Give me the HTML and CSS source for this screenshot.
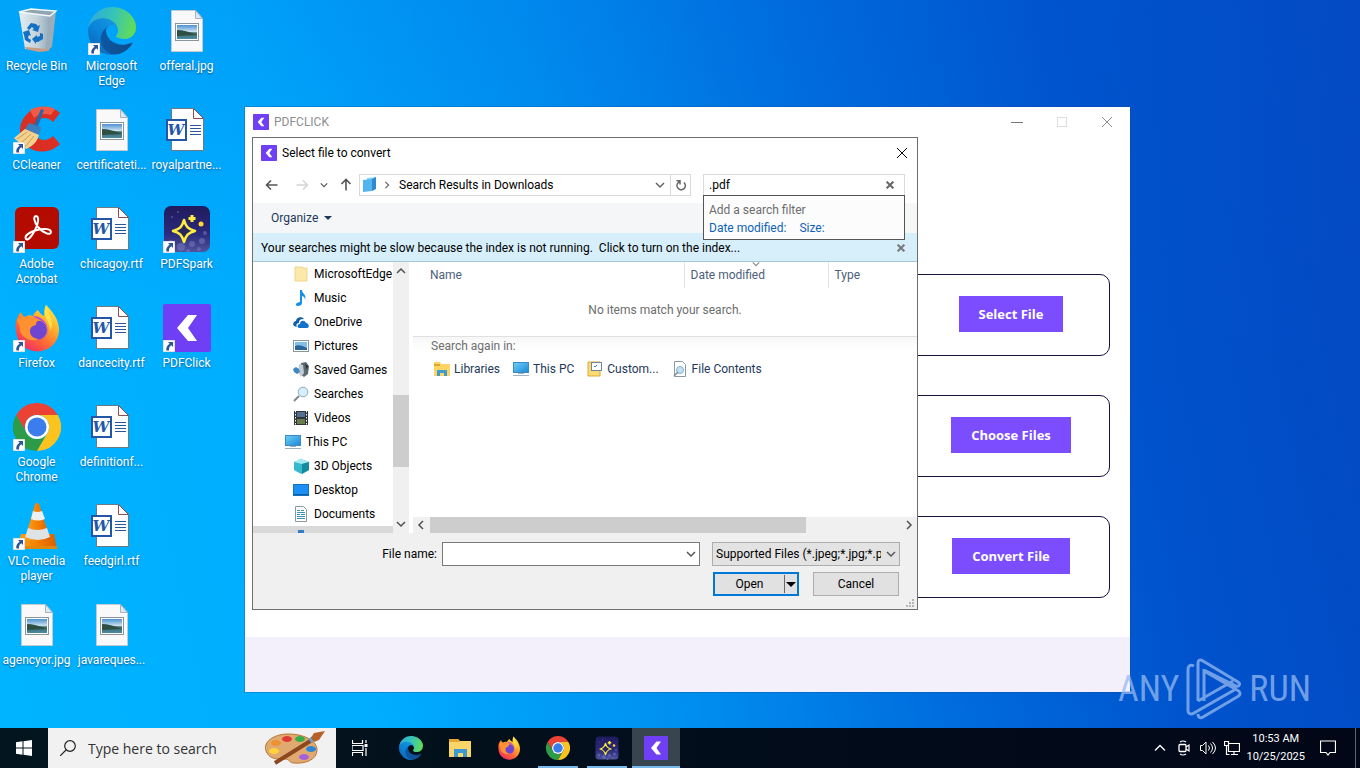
FILE: index.html
```
<!DOCTYPE html>
<html lang="en">
<head>
    <meta charset="UTF-8">
    <meta name="viewport" content="width=device-width, initial-scale=1.0">
    <title>Desktop</title>
    <link rel="stylesheet" href="styles.css">
</head>
<body>
    <!-- Shared icons -->
    <svg class="sprite" aria-hidden="true">
        <defs>
            <linearGradient id="g-edge1" x1="0" y1="0" x2="1" y2="0"><stop offset="0" stop-color="#0c59a4"/><stop offset="1" stop-color="#114a8b"/></linearGradient>
            <linearGradient id="g-edge2" x1="1" y1="0" x2="0.3" y2="1"><stop offset="0" stop-color="#1b9de2"/><stop offset="0.6" stop-color="#0883d9"/><stop offset="1" stop-color="#1065b4"/></linearGradient>
            <linearGradient id="g-edge3" x1="0" y1="0.3" x2="1" y2="0.5"><stop offset="0" stop-color="#2da9de"/><stop offset="0.5" stop-color="#36c4b8"/><stop offset="1" stop-color="#63dc56"/></linearGradient>
            <linearGradient id="g-fox" x1="0.9" y1="0" x2="0.2" y2="1"><stop offset="0" stop-color="#fff04a"/><stop offset="0.35" stop-color="#ffb02c"/><stop offset="0.65" stop-color="#ff6a35"/><stop offset="1" stop-color="#f0246b"/></linearGradient>
            <linearGradient id="g-sky" x1="0" y1="0" x2="0" y2="1"><stop offset="0" stop-color="#4d92cf"/><stop offset="0.5" stop-color="#cfe6f3"/><stop offset="0.55" stop-color="#3c6a63"/><stop offset="1" stop-color="#4c8aa8"/></linearGradient>
            <linearGradient id="g-bin" x1="0" y1="0" x2="1" y2="0"><stop offset="0" stop-color="#e3edf3"/><stop offset="0.6" stop-color="#c3d1da"/><stop offset="1" stop-color="#93aab9"/></linearGradient>
            <linearGradient id="g-screen" x1="0" y1="0" x2="1" y2="1"><stop offset="0" stop-color="#6fd0fb"/><stop offset="1" stop-color="#1a87d4"/></linearGradient>
            <linearGradient id="g-cone" x1="0" y1="0" x2="1" y2="0"><stop offset="0" stop-color="#ffa31a"/><stop offset="0.5" stop-color="#f58000"/><stop offset="1" stop-color="#d95f00"/></linearGradient>
            <linearGradient id="g-spark" x1="0" y1="0" x2="0" y2="1"><stop offset="0" stop-color="#211a5c"/><stop offset="0.6" stop-color="#2b2a7c"/><stop offset="1" stop-color="#50539a"/></linearGradient>
        </defs>

        <symbol id="i-arrow" viewBox="0 0 12 12">
            <rect width="12" height="12" fill="#fff" stroke="#c6c6c6" stroke-width="1"/>
            <path d="M5 2h5v5L8.300 5.300C6.500 6.500 5.800 8 6 10.500H3.500C2.600 7.500 4.500 5 6.700 3.700z" fill="#2a5699"/>
        </symbol>
        <symbol id="i-bin" viewBox="0 0 48 48">
            <path d="M6 5l12-3 25 2-6 6z" fill="#8fa5b2"/>
            <path d="M6 5l31 4-1 35-24-2z" fill="url(#g-bin)"/>
            <path d="M37 9l6-5-4 36-7 4z" fill="#9badb9"/>
            <path d="M12 40l23 2 4-3-4 5-9 1-13-3z" fill="#c79d86"/>
            <path d="M6 5l12-3 25 2-6 5z" fill="none" stroke="#f4f9fc" stroke-width="1.300"/>
            <g fill="#1470c2"><path d="M14 21l4-5 5 1 2 2 2-1-2 7-6-2 2-1-2-2-3 3z"/><path d="M10 25l6-2 2 6-2-1-1 3 3 2-1 3-5-3-1-5z"/><path d="M19 32l5-4v2l3-1 0-3 3 1 0 5-5 3h-2v2z"/></g>
        </symbol>
        <symbol id="i-edge" viewBox="0 0 256 256">
            <path fill="url(#g-edge1)" d="M231 190.500c-3.400 1.800-6.900 3.400-10.500 4.700a101.700 101.700 0 0 1-35.900 6.400c-47.300 0-88.500-32.500-88.500-74.300a31.500 31.500 0 0 1 16.400-27.300c-42.800 1.800-53.800 46.400-53.800 72.500 0 74 68.100 81.400 82.800 81.400 7.900 0 19.800-2.300 27-4.600l1.300-.4a128.300 128.300 0 0 0 66.600-52.800 4 4 0 0 0-5.400-5.600z"/>
            <path fill="url(#g-edge2)" d="M105.700 241.400a79.200 79.200 0 0 1-22.700-21.300 80.700 80.700 0 0 1 29.500-120c3.200-1.500 8.500-4.100 15.600-4a32.400 32.400 0 0 1 25.700 13 31.900 31.900 0 0 1 6.300 18.700c0-.2 24.500-79.600-80-79.600-43.900 0-80 41.600-80 78.200a130.200 130.200 0 0 0 12.100 56 128 128 0 0 0 156.400 67 75.500 75.500 0 0 1-62.800-8z"/>
            <path fill="url(#g-edge3)" d="M152.300 148.900c-.9 1-3.400 2.500-3.400 5.600 0 2.600 1.700 5.200 4.800 7.300 14.300 10 41.400 8.600 41.500 8.600a59.600 59.600 0 0 0 30.300-8.300 61.400 61.400 0 0 0 30.400-52.900c.3-22.400-8-37.300-11.300-43.900C223.500 23.900 177.700 0 128 0A128 128 0 0 0 0 126.200c.5-36.500 36.800-66 80-66 3.500 0 23.500.3 42 10a72.600 72.600 0 0 1 30.900 29.300c6.100 10.600 7.200 24.100 7.200 29.500s-2.700 13.300-7.800 19.900z"/>
        </symbol>
        <symbol id="i-jpg" viewBox="0 0 48 48">
            <path d="M8.500 3.500h24l7 8v33h-31z" fill="#f9f9f9" stroke="#c3cbd0"/>
            <path d="M32.500 3.500v8h7z" fill="#d8eaf4" stroke="#a8b2b8"/>
            <rect x="12.500" y="16.500" width="23" height="17" fill="#fff" stroke="#8b969c"/>
            <rect x="14" y="18" width="20" height="14" fill="url(#g-sky)"/>
            <path d="M14 23q8 0 20 5l-20 1z" fill="#2e4f44"/>
        </symbol>
        <symbol id="i-word" viewBox="0 0 48 48">
            <path d="M8.500 2.500h22l10 10v32h-32z" fill="#fff" stroke="#6b7a85"/>
            <path d="M30.500 2.500v10h10z" fill="#fff" stroke="#8a5050"/>
            <path d="M27 19.500h11M27 22.500h11M27 25.500h11M27 28.500h11" stroke="#2b579a"/>
            <rect x="4" y="14" width="19" height="20" fill="#fff" stroke="#2456a8" stroke-width="2"/>
        </symbol>
        <symbol id="i-ccleaner" viewBox="0 0 48 48">
            <path d="M47 7C38-1 23-1 14 8 4 18 5 34 15 41c9 7 23 6 32-3l-7-8c-6 6-14 5-17-1-4-6-2-13 4-16 5-2 9-1 13 3z" fill="#dc2f24"/>
            <path d="M17 4c7-4 17-5 25-1l-4 6c-6-2-13-1-17 3z" fill="#f25a45"/>
            <path d="M28 3l3 1-7 19-4-2z" fill="#2d66a4"/>
            <path d="M16 17l12 4-2 8-14-6z" fill="#3b7fc0"/>
            <path d="M12 23l14 6c-2 7-6 11-13 14L1 32z" fill="#f3d28f"/>
            <path d="M4 33l10-7M8 37l10-9M12 41l9-11" stroke="#cb9d55"/>
        </symbol>
        <symbol id="i-acrobat" viewBox="0 0 48 48">
            <rect x="2" y="2" width="44" height="42" rx="6" fill="#b30b00"/>
            <path d="M13 34c-2-3 3-7 11-9 8-2 14-1 14 2 0 4-8 1-13-5-4-5-5-11-2-11s3 7-1 14c-3 6-7 11-9 9z" fill="none" stroke="#fff" stroke-width="2"/>
        </symbol>
        <symbol id="i-spark" viewBox="0 0 48 48">
            <rect x="1" y="1" width="46" height="46" rx="7" fill="url(#g-spark)"/>
            <g fill="#7076bd" opacity="0.600"><circle cx="8" cy="38" r="3"/><circle cx="18" cy="42" r="4"/><circle cx="29" cy="39" r="3"/><circle cx="39" cy="36" r="3"/><circle cx="36" cy="44" r="2"/><circle cx="25" cy="46" r="2"/><circle cx="42" cy="28" r="2"/><circle cx="9" cy="12" r="1"/><circle cx="15" cy="7" r="1"/></g>
            <path d="M21 15c2 7 4 9 11 11-7 2-9 4-11 11-2-7-4-9-11-11 7-2 9-4 11-11z" fill="#29255f" stroke="#ffee3d" stroke-width="2.600" stroke-linejoin="round"/>
            <path d="M29 10v7M25.500 13.500h7" stroke="#ffee3d" stroke-width="3"/>
            <circle cx="38" cy="19" r="2.500" fill="#ffd92e"/>
        </symbol>
        <symbol id="i-click" viewBox="0 0 48 48">
            <rect width="48" height="48" rx="2" fill="#6f3ff5"/>
            <path d="M25 11h9l-9 13 9 13h-9L14 24z" fill="#fff"/>
        </symbol>
        <symbol id="i-firefox" viewBox="0 0 48 48">
            <path d="M8 8c1 3 2 4 4 5 3-2 5-2 8-1 1-3 3-5 5-6 0 0 2 4 6 6 1-4 0-8 2-11 6 6 13 14 13 25a21 21 0 0 1-43 0c-1-6 0-12 5-18z" fill="url(#g-fox)"/>
            <circle cx="24" cy="26" r="10" fill="#7045cf"/>
            <path d="M4 16c3-4 7-3 9-1 6-3 12-2 16 2-5-1-6 1-6 4-3 1-5 1-6 5-1 5 4 9 9 9-8 4-19-2-19-10 0-4-2-5-3-9z" fill="#ff9131"/>
            <path d="M20 12c6 0 14 4 15 14 0 8-7 11-12 10 10 1 15-9 9-16-4-5-9-5-12-8z" fill="#b64be0"/>
            <path d="M33 1c-2 4-2 9 0 13 3 5 4 8 4 12 4-6 1-13-1-16z" fill="#ffe14a"/>
        </symbol>
        <symbol id="i-chrome" viewBox="0 0 48 48">
            <path d="M3.200 12A24 24 0 0 1 44.800 12H24A12 12 0 0 0 13.600 30z" fill="#ea4335"/>
            <path d="M3.200 12L13.600 30A12 12 0 0 0 34.400 30L24 48A24 24 0 0 1 3.200 12z" fill="#2c9c48"/>
            <path d="M44.800 12A24 24 0 0 1 24 48L34.400 30A12 12 0 0 0 24 12z" fill="#fcc31e"/>
            <circle cx="24" cy="24" r="12" fill="#fff"/>
            <circle cx="24" cy="24" r="9.500" fill="#3b7ded"/>
        </symbol>
        <symbol id="i-vlc" viewBox="0 0 48 48">
            <path d="M8 32h33l3 15H4z" fill="url(#g-cone)"/>
            <path d="M4 44h40v3H4z" fill="#e0880f"/>
            <path d="M22 2q2-2 4 0l11 35q-12 7-25 0z" fill="url(#g-cone)"/>
            <path d="M20 9q4 2 9 0l3 8q-7 3-14 0z" fill="#eceff1"/>
            <path d="M15 26q9 4 19 0l3 9q-12 6-25 0z" fill="#dfe3e6"/>
        </symbol>

        <symbol id="i-folder" viewBox="0 0 16 16"><path d="M2 1h7l1 1h4v13H2z" fill="#fbe9ac" stroke="#edd68c"/></symbol>
        <symbol id="i-music" viewBox="0 0 16 16"><path d="M7 0h2c0 4 5 4 3 10 0-3-2-4-3-4v7c0 2-2 3-4 3s-3-2-1-3 2-1 3-1z" fill="#1a8fe6"/></symbol>
        <symbol id="i-onedrive" viewBox="0 0 16 16"><path d="M1 12c-2-2 0-5 2-5 0-4 6-5 8-2-4 0-5 1-5 4-3 0-3 3-2 4z" fill="#0f5eb0"/><path d="M6 14c-2-1-2-4 1-4 0-4 5-4 6-1 3 0 4 5 1 5z" fill="#1273cc"/></symbol>
        <symbol id="i-pictures" viewBox="0 0 16 16"><rect x="0.500" y="2.500" width="15" height="11" fill="#fff" stroke="#8996a1"/><path d="M2 4h12v8H2z" fill="#7fbfe9"/><path d="M2 8q5-2 12 2v2H2z" fill="#2b6597"/></symbol>
        <symbol id="i-games" viewBox="0 0 16 16"><path d="M8 1l5-1 3 4-1 8-4 3-4-3z" fill="#5d6970"/><path d="M6 2l4 1 1 8-3 4-3-5z" fill="#c3ccd2"/><path d="M0 7l3-2 3 2 1 3-3 2-3-2z" fill="#3d87c2"/><path d="M12 2l3 2-1 4z" fill="#252c31"/></symbol>
        <symbol id="i-search" viewBox="0 0 16 16"><path d="M1 15l5-5" stroke="#7c8790" stroke-width="2"/><circle cx="10" cy="6" r="4.800" fill="#d5effc" stroke="#8fa9b9"/></symbol>
        <symbol id="i-videos" viewBox="0 0 16 16"><path d="M1 1h14v14H1z" fill="#2e3438"/><path d="M4 2h8v5H4z" fill="#536f92"/><path d="M4 9h8v5H4z" fill="#6a7d4f"/><path d="M2.500 1v14M13.500 1v14" stroke="#fff" stroke-dasharray="1.500 1.500"/></symbol>
        <symbol id="i-pc" viewBox="0 0 16 16"><rect x="0.500" y="1.500" width="15" height="10" fill="url(#g-screen)" stroke="#3d8ac2"/><path d="M5 12.500h6M0 14.500h16" stroke="#9db2c0"/></symbol>
        <symbol id="i-cube" viewBox="0 0 16 16"><path d="M1 4l7-3 8 3v8l-8 4-7-4z" fill="#36b8cf"/><path d="M1 4l7-3 8 3-7 2z" fill="#a3ecf2"/><path d="M9 6l7-2v8l-7 4z" fill="#148a9d"/></symbol>
        <symbol id="i-desktop" viewBox="0 0 16 16"><rect x="0.500" y="2.500" width="15" height="11" fill="#1a90f4" stroke="#1671bd"/><path d="M1 12.500h14" stroke="#0d5ca8"/></symbol>
        <symbol id="i-docs" viewBox="0 0 16 16"><path d="M2.500 0.500h8l3 3v12h-11z" fill="#fff" stroke="#8b989f"/><path d="M4 4.500h3M8 4.500h3M4 6.500h8M4 8.500h3M8 8.500h4M4 10.500h8M4 12.500h8" stroke="#3d91bd"/></symbol>
        <symbol id="i-libraries" viewBox="0 0 16 16"><path d="M0 1h6l1 2h9v12H0z" fill="#fcd462"/><path d="M0 3h6v2H0z" fill="#dda52c"/><path d="M3 15V9h10v6h-3v-3H6v3z" fill="#409bd2"/></symbol>
        <symbol id="i-custom" viewBox="0 0 16 16"><path d="M1 1h12v14H1z" fill="#fada72" stroke="#dcac35"/><rect x="4.500" y="1.500" width="10" height="8" fill="#fff" stroke="#6e8698"/><path d="M7 5l1 1 2-2" stroke="#2480c7" fill="none"/></symbol>
        <symbol id="i-contents" viewBox="0 0 16 16"><path d="M2.500 0.500h8l3 3v12h-11z" fill="#fff" stroke="#8b989f"/><circle cx="8" cy="9" r="3.500" fill="#c2e1f4" stroke="#8ab0ca"/><path d="M2 15l4-4" stroke="#75899a" stroke-width="1.500"/></symbol>
        <symbol id="i-results" viewBox="0 0 16 16"><path d="M5 1l9-1v12l-9 1z" fill="#8cd3f8"/><path d="M1 3l9-1v12l-9 1z" fill="#54b4ee"/><path d="M10 2l4-2v12l-4 2z" fill="#2d8cd0"/></symbol>

        <symbol id="i-left" viewBox="0 0 16 16"><path d="M13.500 8H2.500M7 3.500L2.500 8 7 12.500" fill="none" stroke="currentColor" stroke-width="1.600"/></symbol>
        <symbol id="i-down" viewBox="0 0 10 10"><path d="M1 3l4 4 4-4" fill="none" stroke="currentColor" stroke-width="1.500"/></symbol>
        <symbol id="i-x" viewBox="0 0 12 12"><path d="M1 1l10 10M11 1L1 11" fill="none" stroke="currentColor"/></symbol>
    </svg>

    <main class="desktop">
        <ul class="shortcuts">
            <li><span class="pic"><svg><use href="#i-bin"/></svg></span>Recycle Bin</li>
            <li><span class="pic"><svg><use href="#i-ccleaner"/></svg><svg class="link-mark"><use href="#i-arrow"/></svg></span>CCleaner</li>
            <li><span class="pic"><svg><use href="#i-acrobat"/></svg><svg class="link-mark"><use href="#i-arrow"/></svg></span>Adobe Acrobat</li>
            <li><span class="pic"><svg><use href="#i-firefox"/></svg><svg class="link-mark"><use href="#i-arrow"/></svg></span>Firefox</li>
            <li><span class="pic"><svg><use href="#i-chrome"/></svg><svg class="link-mark"><use href="#i-arrow"/></svg></span>Google Chrome</li>
            <li><span class="pic"><svg><use href="#i-vlc"/></svg><svg class="link-mark"><use href="#i-arrow"/></svg></span>VLC media player</li>
            <li><span class="pic"><svg><use href="#i-jpg"/></svg></span>agencyor.jpg</li>
            <li><span class="pic"><svg><use href="#i-edge"/></svg><svg class="link-mark"><use href="#i-arrow"/></svg></span>Microsoft Edge</li>
            <li><span class="pic"><svg><use href="#i-jpg"/></svg></span>certificateti...</li>
            <li><span class="pic"><svg><use href="#i-word"/></svg><b class="word-letter">W</b></span>chicagoy.rtf</li>
            <li><span class="pic"><svg><use href="#i-word"/></svg><b class="word-letter">W</b></span>dancecity.rtf</li>
            <li><span class="pic"><svg><use href="#i-word"/></svg><b class="word-letter">W</b></span>definitionf...</li>
            <li><span class="pic"><svg><use href="#i-word"/></svg><b class="word-letter">W</b></span>feedgirl.rtf</li>
            <li><span class="pic"><svg><use href="#i-jpg"/></svg></span>javareques...</li>
            <li><span class="pic"><svg><use href="#i-jpg"/></svg></span>offeral.jpg</li>
            <li><span class="pic"><svg><use href="#i-word"/></svg><b class="word-letter">W</b></span>royalpartne...</li>
            <li><span class="pic"><svg><use href="#i-spark"/></svg><svg class="link-mark"><use href="#i-arrow"/></svg></span>PDFSpark</li>
            <li><span class="pic"><svg><use href="#i-click"/></svg><svg class="link-mark"><use href="#i-arrow"/></svg></span>PDFClick</li>
        </ul>

        <section class="app">
            <header class="app-title">
                <svg class="ico"><use href="#i-click"/></svg>
                <span>PDFCLICK</span>
                <div class="win-buttons">
                    <button aria-label="Minimize"><svg viewBox="0 0 12 12"><path d="M0 6.500h12" stroke="#777"/></svg></button>
                    <button aria-label="Maximize" disabled><svg viewBox="0 0 12 12"><rect x="1.500" y="1.500" width="9" height="9" fill="none" stroke="#ddd"/></svg></button>
                    <button aria-label="Close"><svg><use href="#i-x"/></svg></button>
                </div>
            </header>
            <div class="cards">
                <div class="card"><div class="card-action"><button>Select File</button></div></div>
                <div class="card"><div class="card-action"><button>Choose Files</button></div></div>
                <div class="card"><div class="card-action"><button>Convert File</button></div></div>
            </div>
            <footer class="app-footer"></footer>

            <!-- File picker -->
            <section class="dialog" role="dialog" aria-labelledby="dialog-title">
                <header class="dialog-title">
                    <svg class="ico"><use href="#i-click"/></svg>
                    <h1 id="dialog-title">Select file to convert</h1>
                    <button aria-label="Close"><svg><use href="#i-x"/></svg></button>
                </header>

                <div class="nav">
                    <button class="nav-back" aria-label="Back"><svg><use href="#i-left"/></svg></button>
                    <button class="nav-forward" aria-label="Forward" disabled><svg><use href="#i-left"/></svg></button>
                    <button class="nav-recent" aria-label="Recent locations"><svg><use href="#i-down"/></svg></button>
                    <button class="nav-up" aria-label="Up"><svg><use href="#i-left"/></svg></button>
                    <div class="address">
                        <svg class="ico"><use href="#i-results"/></svg>
                        <svg class="crumb"><use href="#i-down"/></svg>
                        <span>Search Results in Downloads</span>
                        <button aria-label="Previous locations"><svg><use href="#i-down"/></svg></button>
                        <button class="refresh" aria-label="Refresh"><svg viewBox="0 0 12 12"><path d="M9 3.500A4.200 4.200 0 1 1 4.500 2.700M1.500 1.700H5v3.800" fill="none" stroke="currentColor" stroke-width="1.500"/></svg></button>
                    </div>
                    <div class="search">
                        <input type="text" value=".pdf" aria-label="Search">
                        <button aria-label="Clear search"><svg><use href="#i-x"/></svg></button>
                        <div class="filters">
                            <p>Add a search filter</p>
                            <a href="#">Date modified:</a>
                            <a href="#">Size:</a>
                        </div>
                    </div>
                </div>

                <div class="toolbar"><button>Organize <i class="caret"></i></button></div>

                <div class="notice">
                    <span>Your searches might be slow because the index is not running.&nbsp; Click to turn on the index...</span>
                    <button aria-label="Dismiss"><svg><use href="#i-x"/></svg></button>
                </div>

                <div class="browser">
                    <ul class="tree">
                        <li><svg class="ico"><use href="#i-folder"/></svg>MicrosoftEdge</li>
                        <li><svg class="ico"><use href="#i-music"/></svg>Music</li>
                        <li><svg class="ico"><use href="#i-onedrive"/></svg>OneDrive</li>
                        <li><svg class="ico"><use href="#i-pictures"/></svg>Pictures</li>
                        <li><svg class="ico"><use href="#i-games"/></svg>Saved Games</li>
                        <li><svg class="ico"><use href="#i-search"/></svg>Searches</li>
                        <li><svg class="ico"><use href="#i-videos"/></svg>Videos</li>
                        <li class="root"><svg class="ico"><use href="#i-pc"/></svg>This PC</li>
                        <li><svg class="ico"><use href="#i-cube"/></svg>3D Objects</li>
                        <li><svg class="ico"><use href="#i-desktop"/></svg>Desktop</li>
                        <li><svg class="ico"><use href="#i-docs"/></svg>Documents</li>
                        <li class="selected"><svg class="ico" viewBox="0 0 16 16"><path d="M5 0h6v8h4l-7 7-7-7h4z" fill="#2f7fc4"/></svg></li>
                    </ul>
                    <div class="scroll-y">
                        <svg class="flip"><use href="#i-down"/></svg>
                        <i></i>
                        <svg><use href="#i-down"/></svg>
                    </div>
                    <div class="results">
                        <table>
                            <thead>
                                <tr><th class="col-name">Name</th><th class="col-date">Date modified<svg><use href="#i-down"/></svg></th><th>Type</th></tr>
                            </thead>
                            <tbody>
                                <tr><td colspan="3">No items match your search.</td></tr>
                            </tbody>
                        </table>
                        <div class="again">
                            <p>Search again in:</p>
                            <div class="places">
                                <button><svg class="ico"><use href="#i-libraries"/></svg>Libraries</button>
                                <button><svg class="ico"><use href="#i-pc"/></svg>This PC</button>
                                <button><svg class="ico"><use href="#i-custom"/></svg>Custom...</button>
                                <button><svg class="ico"><use href="#i-contents"/></svg>File Contents</button>
                            </div>
                        </div>
                        <div class="scroll-x">
                            <svg class="turn-left"><use href="#i-down"/></svg>
                            <div><i></i></div>
                            <svg class="turn-right"><use href="#i-down"/></svg>
                        </div>
                    </div>
                </div>

                <footer class="dialog-footer">
                    <div class="line">
                        <label for="file-name">File name:</label>
                        <div class="combo">
                            <input type="text" id="file-name">
                            <svg><use href="#i-down"/></svg>
                        </div>
                        <div class="file-type">
                            <select aria-label="File type"><option>Supported Files (*.jpeg;*.jpg;*.png)</option></select>
                            <svg><use href="#i-down"/></svg>
                        </div>
                    </div>
                    <div class="line actions">
                        <button class="open"><span>Open</span><b><i class="caret"></i></b></button>
                        <button class="cancel">Cancel</button>
                    </div>
                    <svg class="grip" viewBox="0 0 9 9"><path d="M6 0h2v2H6zM3 3h2v2H3zM6 3h2v2H6zM0 6h2v2H0zM3 6h2v2H3zM6 6h2v2H6z" fill="#b5b5b5"/></svg>
                </footer>
            </section>
        </section>

        <div class="watermark">
            <span>ANY</span>
            <svg viewBox="0 0 56 62"><path d="M8 8C4 6 2 8 2 12v40c0 4 3 5 6 3l42-24M12 43V5c0-3 2-4 5-2l35 21c3 2 1 5-2 4L18 12M12 43l35-20M12 56c0 3 2 5 5 3l34-20c4-2 4-5 0-7L18 13v30" fill="none" stroke="currentColor" stroke-width="3"/></svg>
            <span>RUN</span>
        </div>
    </main>

    <footer class="taskbar">
        <button class="start" aria-label="Start"><svg viewBox="0 0 16 16"><path d="M0 2.200L6.500 1.300v6.200H0zM7.500 1.200L16 0v7.500H7.500zM0 8.500h6.500v6.200L0 13.800zM7.500 8.500H16V16l-8.500-1.200z" fill="#fff"/></svg></button>
        <div class="task-search">
            <svg class="lens" viewBox="0 0 16 16"><circle cx="10" cy="6" r="5.300" fill="none" stroke="#222" stroke-width="1.200"/><path d="M6 10l-6 6" stroke="#222" stroke-width="1.200"/></svg>
            <input type="text" placeholder="Type here to search" aria-label="Search Windows">
            <svg class="palette" viewBox="0 0 62 34">
                <path d="M3 22C-3 12 9 3 24 3s29 6 29 16-12 14-23 13c-5 0-4-4-9-4-6 0-14 1-18-6z" fill="#e0a970" stroke="#b87536"/>
                <ellipse cx="12" cy="12" rx="5" ry="3" fill="#f0912f"/><ellipse cx="10" cy="20" rx="5" ry="3" fill="#ffd43b"/><ellipse cx="23" cy="8" rx="5" ry="3" fill="#e03b35"/><ellipse cx="36" cy="8" rx="5" ry="3" fill="#39ac49"/><ellipse cx="47" cy="18" rx="5" ry="3" fill="#2c86d4"/><ellipse cx="40" cy="26" rx="5" ry="3" fill="#a561dc"/>
                <path d="M11 32L48 9" stroke="#8a4720" stroke-width="4"/><path d="M46 10l5-4" stroke="#6aa6cc" stroke-width="5"/><path d="M50 2l11-2-6 9-5 2-3-4z" fill="#b9602a"/>
            </svg>
        </div>
        <button class="task-view" aria-label="Task view"><svg viewBox="0 0 16 16"><path d="M0.500 0v3.500h10V0M0.500 16v-3.500h10V16M0 5.500h11v5H0zM14 0v3M14 8v8" fill="none" stroke="#fff" stroke-width="1.200"/><path d="M12.500 4h3v3h-3z" fill="#fff"/></svg></button>
        <nav class="tasks">
            <button aria-label="Microsoft Edge"><svg><use href="#i-edge"/></svg></button>
            <button aria-label="File Explorer"><svg viewBox="0 0 24 24"><path d="M1 3h9l2 2h11v16H1z" fill="#fbd568"/><path d="M1 3h9l2 3H1z" fill="#e5a52e"/><path d="M6 21v-8h13v8h-4v-4h-5v4z" fill="#3a98d2"/></svg></button>
            <button aria-label="Firefox"><svg><use href="#i-firefox"/></svg></button>
            <button class="running" aria-label="Google Chrome"><svg><use href="#i-chrome"/></svg></button>
            <button class="running" aria-label="PDFSpark"><svg><use href="#i-spark"/></svg></button>
            <button class="running active" aria-label="PDFClick"><svg><use href="#i-click"/></svg></button>
        </nav>
        <div class="tray">
            <button aria-label="Show hidden icons"><svg viewBox="0 0 16 16"><path d="M3 10.500l5-5 5 5" fill="none" stroke="#fff" stroke-width="1.300"/></svg></button>
            <button aria-label="Meet now"><svg viewBox="0 0 16 16"><rect x="3" y="4.500" width="7" height="7" rx="1" fill="none" stroke="#fff" stroke-width="1.300"/><path d="M10 7l3-2v6l-3-2M4 2q3-2 6 0M4 14q3 2 6 0" fill="none" stroke="#fff" stroke-width="1.200"/></svg></button>
            <button aria-label="Volume"><svg viewBox="0 0 16 16"><path d="M0.500 5.500h2l3.500-3.500v12l-3.500-3.500h-2zM8.500 5.500q2 2.500 0 5M10.500 3.500q4 4.500 0 9M12.500 2q6 6 0 12" fill="none" stroke="#fff"/></svg></button>
            <button aria-label="Network"><svg viewBox="0 0 16 16"><path d="M4.500 3.500h11v8h-11zM10 11.500v3M7 14.500h7M0.500 1.500h4v4h-4zM2.500 5.500v9h3" fill="none" stroke="#fff" stroke-width="1.200"/></svg></button>
            <div class="clock"><time>10:53 AM</time><time>10/25/2025</time></div>
            <button class="alerts" aria-label="Notifications"><svg viewBox="0 0 16 16"><path d="M0.500 1h15v11.500H10L8 15l-2-2.500H0.500z" fill="none" stroke="#fff" stroke-width="1.200"/></svg></button>
        </div>
    </footer>
</body>
</html>
```
FILE: styles.css
```
* {
    box-sizing: border-box;
}

body {
    display: flex;
    flex-direction: column;
    min-height: 100vh;
    margin: 0;
    font-family: Roboto, "Open Sans", sans-serif;
    font-size: 12px;
    line-height: 16px;
    color: #000;
}

ul, p, h1 {
    margin: 0;
    padding: 0;
    list-style: none;
    font-size: inherit;
    font-weight: normal;
}

button, input, select {
    margin: 0;
    padding: 0;
    border: 0;
    background: none;
    color: inherit;
    font: inherit;
}

button {
    display: flex;
    align-items: center;
    justify-content: center;
}

svg {
    display: block;
    flex: none;
}

.sprite {
    position: absolute;
    width: 0;
    height: 0;
}

.ico {
    width: 16px;
    height: 16px;
}

.caret {
    border: 4px solid transparent;
    border-top-color: currentColor;
    border-bottom: 0;
}

/* Desktop */
.desktop {
    position: relative;
    flex: 1;
    overflow: hidden;
    background:
        linear-gradient(180deg, rgba(0, 90, 215, 0.15), rgba(0, 90, 220, 0) 50%),
        linear-gradient(78deg, #00b4ff 0%, #00adff 25%, #0090f0 45%, #006edf 62%, #0052cc 80%, #0348c0 100%);
}

.shortcuts {
    display: grid;
    grid-template-rows: repeat(7, 99px);
    grid-auto-flow: column;
    grid-auto-columns: 75px;
    justify-content: start;
    color: #fff;
    line-height: 15px;
    text-align: center;
    text-shadow: 0 1px 2px rgba(0, 30, 80, 0.6);
}

.shortcuts li {
    display: flex;
    flex-direction: column;
    align-items: center;
    padding: 7px 2px 0 0;
}

.pic {
    position: relative;
    margin-bottom: 4px;
}

.pic svg {
    width: 48px;
    height: 48px;
}

.pic .link-mark {
    position: absolute;
    left: 0;
    bottom: 0;
    width: 12px;
    height: 12px;
}

.word-letter {
    position: absolute;
    top: 14px;
    left: 4px;
    width: 19px;
    font: italic bold 15px/20px "DejaVu Serif", serif;
    color: #2456a8;
    text-shadow: none;
}

/* App window */
.app {
    position: absolute;
    inset: 107px 230px 36px 245px;
    display: flex;
    flex-direction: column;
    background: #fff;
    box-shadow: 0 0 0 1px rgba(20, 70, 130, 0.3);
}

.app-title {
    display: flex;
    align-items: center;
    height: 29px;
    padding-left: 8px;
    gap: 5px;
    color: #8e8e8e;
}

.win-buttons {
    display: flex;
    margin: 0 1px 0 auto;
}

.win-buttons button {
    width: 45px;
    height: 29px;
}

.win-buttons svg, .dialog-title button svg {
    width: 12px;
    height: 12px;
}

.cards {
    display: flex;
    flex: 1;
    flex-direction: column;
    justify-content: flex-end;
    gap: 39px;
    padding: 0 20px 39px;
}

.card {
    display: flex;
    align-items: center;
    justify-content: flex-end;
    height: 82px;
    padding: 0 38px 2px 0;
    border: 1px solid #14143c;
    border-radius: 10px;
}

.card-action {
    display: flex;
    justify-content: center;
    width: 120px;
}

.card button {
    height: 36px;
    padding: 0 20px;
    background: #7c4dff;
    color: #fff;
    font: bold 13px "Open Sans", sans-serif;
    white-space: nowrap;
}

.app-footer {
    height: 55px;
    background: #f3f0fb;
}

/* Dialog */
.dialog {
    position: absolute;
    inset: 30px 212px auto 7px;
    border: 1px solid #6e6e6e;
    background: #fff;
}

.dialog-title {
    display: flex;
    align-items: center;
    height: 30px;
    padding-left: 8px;
    gap: 5px;
}

.dialog-title button {
    width: 30px;
    height: 30px;
    margin-left: auto;
}

.nav {
    display: flex;
    align-items: center;
    height: 35px;
    padding: 0 12px 2px 11px;
    color: #555;
}

.nav svg {
    width: 16px;
    height: 16px;
}

.nav-forward {
    margin-left: 14px;
    color: #d4d4d4;
}

.nav-forward svg {
    transform: rotate(180deg);
}

.nav .nav-recent {
    width: 28px;
}

.nav .nav-recent svg {
    width: 8px;
    height: 8px;
}

.nav-up {
    margin: 0 5px 0 0;
}

.nav-up svg {
    transform: rotate(90deg);
}

.address {
    display: flex;
    flex: 1;
    align-items: center;
    height: 22px;
    padding-left: 2px;
    border: 1px solid #d9d9d9;
    color: #000;
}

.address .crumb {
    width: 8px;
    height: 8px;
    margin: 0 8px 0 5px;
    color: #666;
    transform: rotate(-90deg);
}

.address button {
    width: 20px;
    height: 20px;
    color: #666;
}

.address span + button {
    margin-left: auto;
}

.address button svg {
    width: 10px;
    height: 10px;
}

.address .refresh {
    border-left: 1px solid #d9d9d9;
}

.address .refresh svg {
    width: 12px;
    height: 12px;
}

.search {
    position: relative;
    display: flex;
    width: 202px;
    height: 22px;
    margin-left: 12px;
    border: 1px solid #d9d9d9;
}

.search input {
    flex: 1;
    min-width: 0;
    padding-left: 5px;
    color: #000;
    outline: 0;
}

.search button {
    width: 28px;
    color: #666;
}

.search button svg, .notice button svg {
    width: 8px;
    height: 8px;
    stroke-width: 3;
}

.filters {
    position: absolute;
    top: 20px;
    left: -1px;
    right: -1px;
    z-index: 1;
    padding: 5px 5px 2px;
    border: 1px solid #555;
    background: #fcfcfc;
    line-height: 18px;
    color: #6d6d6d;
}

.filters a {
    margin-right: 10px;
    color: #0f62b8;
    text-decoration: none;
}

.toolbar {
    display: flex;
    align-items: center;
    height: 30px;
    padding-left: 18px;
    background: #f5f6f7;
    color: #1e395b;
}

.toolbar button {
    gap: 6px;
}

.notice {
    display: flex;
    align-items: center;
    justify-content: space-between;
    height: 29px;
    padding: 2px 0 0 8px;
    border-bottom: 1px solid #a3c8d6;
    background: #d7effb;
}

.notice button {
    width: 32px;
    height: 26px;
    color: #777;
}

.browser {
    display: flex;
    height: 271px;
}

.tree {
    width: 140px;
    overflow: hidden;
    white-space: nowrap;
}

.tree li {
    display: flex;
    align-items: center;
    height: 24px;
    padding-left: 40px;
    gap: 5px;
}

.tree .root {
    padding-left: 32px;
}

.tree .selected {
    background: #d9d9d9;
}

.scroll-y {
    display: flex;
    flex-direction: column;
    align-items: center;
    width: 16px;
    margin-right: 4px;
    padding: 4px 0;
    background: #f0f0f0;
    color: #505050;
}

.scroll-y svg, .scroll-x svg {
    width: 10px;
    height: 10px;
}

.scroll-y i {
    width: 16px;
    height: 72px;
    margin: 119px 0 auto;
    background: #cdcdcd;
}

.flip {
    transform: rotate(180deg);
}

.turn-left {
    transform: rotate(90deg);
}

.turn-right {
    transform: rotate(-90deg);
}

.results {
    display: flex;
    flex: 1;
    flex-direction: column;
    min-width: 0;
}

.results table {
    width: 100%;
    border-collapse: collapse;
    table-layout: fixed;
}

.results th {
    position: relative;
    height: 26px;
    padding: 0 6px;
    border-right: 1px solid #e5e5e5;
    color: #4c607a;
    font-weight: normal;
    text-align: left;
}

.results th:last-child {
    border-right: 0;
}

.results .col-name {
    width: 271px;
    padding-left: 17px;
}

.results .col-date {
    width: 144px;
}

.results th svg {
    position: absolute;
    top: -2px;
    left: 67px;
    width: 8px;
    height: 8px;
    color: #8a8a8a;
}

.results td {
    height: 48px;
    padding: 0 0 4px;
    border-bottom: 1px solid #e0e0e0;
    color: #6d6d6d;
    text-align: center;
}

.again {
    flex: 1;
    padding: 1px 18px;
    background: linear-gradient(#f7f7f7, #fff 14px);
    color: #6d6d6d;
}

.places {
    display: flex;
    margin-top: 7px;
    padding-left: 3px;
    gap: 13px;
    color: #1e395b;
}

.places button {
    gap: 4px;
}

.scroll-x {
    display: flex;
    align-items: center;
    height: 16px;
    padding: 0 3px;
    background: #f0f0f0;
    color: #505050;
}

.scroll-x div {
    flex: 1;
    margin: 0 4px;
}

.scroll-x i {
    display: block;
    width: 80%;
    height: 16px;
    background: #cdcdcd;
}

.dialog-footer {
    position: relative;
    padding: 9px 17px 13px;
    background: #f0f0f0;
}

.line {
    display: flex;
    align-items: center;
    justify-content: flex-end;
}

.line label {
    margin-right: 5px;
}

.combo, .file-type {
    position: relative;
}

.combo {
    width: 258px;
    margin-right: 12px;
}

.combo input {
    display: block;
    width: 100%;
    height: 24px;
    padding: 0 20px 0 4px;
    border: 1px solid #7a7a7a;
    background: #fff;
}

.file-type select {
    display: block;
    width: 188px;
    height: 24px;
    padding: 0 18px 0 3px;
    border: 1px solid #adadad;
    background: #e3e3e3;
    appearance: none;
    text-overflow: clip;
}

.combo svg, .file-type svg {
    position: absolute;
    top: 7px;
    right: 4px;
    width: 10px;
    height: 10px;
    color: #555;
    pointer-events: none;
}

.actions {
    margin-top: 6px;
    padding-right: 1px;
    gap: 14px;
}

.actions button {
    width: 86px;
    height: 24px;
    border: 1px solid #adadad;
    background: #e1e1e1;
}

.actions .open {
    border: 2px solid #0078d7;
}

.open span {
    flex: 1;
}

.open b {
    display: flex;
    align-items: center;
    height: 18px;
    padding: 0 1px;
    border-left: 1px solid #666;
}

.open .caret {
    border-width: 5px 5px 0;
}

.grip {
    position: absolute;
    right: 2px;
    bottom: 1px;
    width: 9px;
    height: 9px;
}

.watermark {
    position: absolute;
    right: 49px;
    bottom: 8px;
    display: flex;
    align-items: center;
    gap: 7px;
    color: rgba(150, 185, 240, 0.75);
    font: 36px/62px "Roboto Condensed", "Open Sans Condensed", Lato, sans-serif;
}

.watermark svg {
    width: 56px;
    height: 62px;
}

/* Taskbar */
.taskbar {
    display: flex;
    height: 40px;
    background: linear-gradient(90deg, #03161f, #020c1a 60%, #020717);
    color: #fff;
}

.start, .task-view {
    width: 48px;
}

.start svg, .task-view svg {
    width: 16px;
    height: 16px;
}

.task-search {
    display: flex;
    align-items: center;
    width: 288px;
    padding: 0 10px 0 12px;
    gap: 12px;
    background: #f1f1f1;
}

.lens {
    width: 16px;
    height: 16px;
}

.task-search input {
    flex: 1;
    min-width: 0;
    font: 14px "Open Sans", sans-serif;
}

.task-search input::placeholder {
    color: #333;
    opacity: 1;
}

.palette {
    width: 62px;
    height: 34px;
}

.tasks {
    display: flex;
    gap: 1px;
    padding-left: 3px;
}

.tasks button {
    position: relative;
    width: 48px;
}

.tasks svg {
    width: 24px;
    height: 24px;
}

.running::after {
    content: "";
    position: absolute;
    inset: auto 4px 0;
    height: 2px;
    background: #76b9ed;
}

.active {
    background: #38454e;
}

.active::after {
    inset: auto 0 0;
}

.tray {
    display: flex;
    align-items: center;
    margin: 0 4px 0 auto;
    border-right: 1px solid #5d6673;
}

.tray button {
    width: 24px;
    height: 40px;
}

.tray svg {
    width: 16px;
    height: 16px;
}

.clock {
    display: flex;
    flex-direction: column;
    padding: 0 2px;
    font-size: 11px;
    line-height: 18px;
    text-align: center;
}

.tray .alerts {
    width: 48px;
    padding-right: 7px;
}
```
